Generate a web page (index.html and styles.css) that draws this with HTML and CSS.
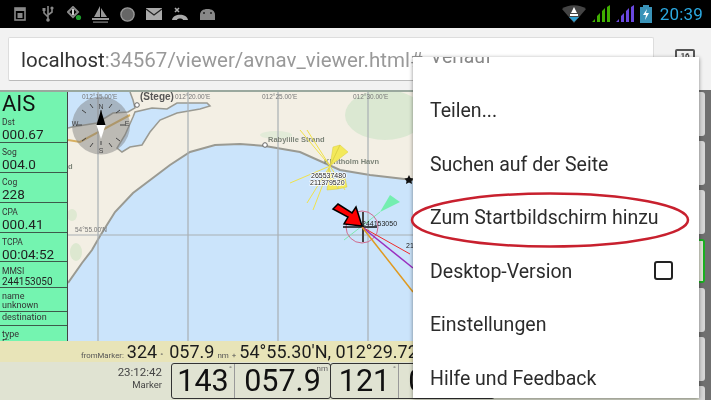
FILE: index.html
```html
<!DOCTYPE html>
<html lang="de">
<head>
  <meta charset="UTF-8" />
  <title>avnav viewer</title>
  <link rel="stylesheet" href="styles.css">
</head>
<body>
  <div class="statusbar">
    <div class="status-icons">
      <svg width="18" height="16" viewBox="0 0 18 16"><rect x="1" y="2" width="10" height="12" fill="none" stroke="#888" stroke-width="1.600"/><rect x="1" y="2" width="10" height="3" fill="#888"/><rect x="3.500" y="7" width="5" height="5" fill="#888"/></svg>
      <svg width="15" height="18" viewBox="0 0 15 18"><path d="M6 1v15M6 12L2 8V5M6 10l4-3V4" fill="none" stroke="#888" stroke-width="1.600"/><circle cx="6" cy="15" r="1.800" fill="#888"/><rect x="0.500" y="3" width="3" height="3" fill="#888"/><circle cx="10" cy="3" r="1.600" fill="#888"/></svg>
      <svg width="15" height="16" viewBox="0 0 15 16"><path d="M6 1L1 6l5 5 5-5z" fill="none" stroke="#888" stroke-width="2"/><path d="M6 3v6" stroke="#ccc" stroke-width="2"/><circle cx="11.500" cy="11.500" r="2.600" fill="#1c9a2c"/></svg>
      <svg width="18" height="19" viewBox="0 0 18 19"><path d="M8 1L2 12h6zM9 3v9h6z" fill="#999"/><rect x="0" y="13" width="17" height="2" fill="#999"/><rect x="1" y="16.500" width="15" height="1.200" fill="#888"/></svg>
      <svg width="16" height="15" viewBox="0 0 16 15"><circle cx="7.500" cy="7.500" r="6.600" fill="#666" stroke="#999" stroke-width="1.400"/></svg>
      <svg width="16" height="12" viewBox="0 0 16 12"><rect width="16" height="12" fill="#aaa"/><path d="M0 1l8 6 8-6" fill="none" stroke="#222" stroke-width="1.300"/></svg>
      <svg width="17" height="14" viewBox="0 0 17 14"><path d="M3 1l4 4M7 1L3 5" stroke="#aaa" stroke-width="1.600"/><path d="M0 13c1-7 15-7 16 0h-5c0-2-6-2-6 0z" fill="#aaa"/></svg>
      <svg width="17" height="12" viewBox="0 0 17 12"><path d="M1 12V7c0-4 3-6 7.500-6s7.500 2 7.500 6v5z" fill="#888"/><circle cx="5" cy="5" r="1" fill="#222"/><circle cx="12" cy="5" r="1" fill="#222"/></svg>
    </div>
    <div class="status-right">
      <svg width="24" height="18" viewBox="0 0 24 18"><path d="M0 4C6-1 18-1 24 4L12 18z" fill="#444"/><path d="M12 2l3 6H9zM8 9h8v2H8z" fill="#fff"/><path d="M7 12h10l-5 5z" fill="#2f9ed0"/></svg>
      <svg width="18" height="18" viewBox="0 0 18 18"><path d="M0 17l3-3v3zM5 17V11l3-3v9zM10 17V6l3-3v14zM15 17V2l3-2v17z" fill="#3fae00"/></svg>
      <svg width="18" height="18" viewBox="0 0 18 18"><path d="M0 17l3-3v3zM5 17V11l3-3v9zM10 17V6l3-3v14zM15 17V2l3-2v17z" fill="#6a48e0"/></svg>
      <svg width="12" height="18" viewBox="0 0 12 18"><path d="M3 0h6v2h3v16H0V2h3z" fill="#3a93b8"/><path d="M7 4L3 10h3l-1 5 4-7H6z" fill="#fff"/></svg>
      <span class="clock">20:39</span>
    </div>
  </div>

  <div class="toolbar">
    <div class="urlbox"><span class="host">localhost</span>:34567/viewer/avnav_viewer.html#</div>
    <div class="tabcount">16</div>
  </div>

  <div class="app">
    <div class="main">
      <div class="upper">
        <div class="ais">
          <div class="ais-title">AIS</div>
          <div class="ais-row first"><div class="ais-label">Dst</div><div class="ais-value">000.67</div></div>
          <div class="ais-row"><div class="ais-label">Sog</div><div class="ais-value">004.0</div></div>
          <div class="ais-row"><div class="ais-label">Cog</div><div class="ais-value">228</div></div>
          <div class="ais-row"><div class="ais-label">CPA</div><div class="ais-value">000.41</div></div>
          <div class="ais-row h29"><div class="ais-label">TCPA</div><div class="ais-value">00:04:52</div></div>
          <div class="ais-row h26"><div class="ais-label">MMSI</div><div class="ais-small">244153050</div></div>
          <div class="ais-row h24"><div class="ais-text">name</div><div class="ais-text">unknown</div></div>
          <div class="ais-row h14"><div class="ais-text">destination</div></div>
          <div class="ais-row last"><div class="ais-text">type</div><div class="ais-text">Ei</div></div>
        </div>

        <div class="map">
          <svg class="map-svg" width="631" height="249" viewBox="68 92 631 249">
            <rect x="68" y="92" width="631" height="249" fill="#cbe4fb"/>
            <!-- land -->
            <path d="M68 283L82 263L92 250L100 236L115 212L133 193L170 165L190 152L215 145L240 144L265 146L300 152L340 170L370 175L413 180V92H130L133 100L135 108L128 112L113 113L97 123L72 127L68 128Z" fill="#f3efe4"/>
            <ellipse cx="385" cy="115" rx="40" ry="25" fill="#dbe8d2"/>
            <ellipse cx="276" cy="135" rx="16" ry="4" fill="#e2ebd8"/>
            <ellipse cx="72" cy="215" rx="5" ry="6" fill="#dfe9d2"/>
            <ellipse cx="76" cy="252" rx="6" ry="9" fill="#dde8d0"/>
            <path d="M68 283L82 263L92 250L100 236L115 212L133 193L170 165L190 152L215 145L240 144L265 146L300 152L340 170L370 175L413 180" fill="none" stroke="#9a9a92" stroke-width="2"/>
            <path d="M130 92L133 100L135 108L128 112L113 113L97 123L72 127L68 128" fill="none" stroke="#9a9a92" stroke-width="1.500"/>
            <path d="M133 117L135 112L152 108L167 109L177 103L207 103L210 106L200 109L177 113L160 120L150 132L142 145L130 147L122 152L117 148L125 135Z" fill="#cbe4fb" stroke="#9a9a92" stroke-width="1.500"/>
            <path d="M68 140L80 142L130 115" fill="none" stroke="#d8b060" stroke-width="2"/>
            <!-- grid -->
            <path d="M98 92V341M188 92V341M278 92V341M368 92V341" stroke="#a9b0b4" stroke-width="1.200"/>
            <path d="M68 235H413" stroke="#a9b0b4" stroke-width="1.200"/>
            <text class="grid-label" x="82" y="99">012°15.00'E</text>
            <text class="grid-label" x="175" y="99">012°20.00'E</text>
            <text class="grid-label" x="262" y="99">012°25.00'E</text>
            <text class="grid-label" x="353" y="99">012°30.00'E</text>
            <text class="grid-label" x="75" y="232">54°55.00'N</text>
            <text class="city" x="140" y="100">(Stege)</text>
            <circle cx="137" cy="105" r="2.300" fill="#fff" stroke="#666" stroke-width="1"/>
            <circle cx="265" cy="145" r="2.300" fill="#fff" stroke="#666" stroke-width="1"/>
            <text class="place" x="268" y="142">Rabylille Strand</text>
            <text class="place" x="324" y="164">Klintholm Havn</text>
            <text class="place" x="68" y="169">d</text>
            <path d="M409 175l1.500 3 3 .5-2 2.500 .5 3-3-1.500-3 1.500 .5-3-2-2.500 3-.5z" fill="#111"/>
            <!-- compass -->
            <circle cx="101" cy="125.500" r="29" fill="#7a7a7a" fill-opacity=".45"/>
            <path d="M101 110v4M77 125h5M120 125h5M82 110l4 3M120 110l-4 3M82 141l4-3M120 141l-4-3M90 104l3 4M112 104l-3 4M90 147l3-4M112 147l-3-4M101 141v4" stroke="#444" stroke-width="1"/>
            <path d="M101 110l-4.500 15h9z" fill="#000"/>
            <path d="M101 139l-4.500-14h9z" fill="#fff"/>
            <text class="compass" x="101" y="109">N</text>
            <text class="compass" x="101" y="153">S</text>
            <text class="compass" x="75" y="126">W</text>
            <text class="compass" x="127" y="126">E</text>
            <!-- ais cluster -->
            <g stroke="#f0e24a" stroke-width="1">
              <path d="M330 166L300 130M330 166L307 130M330 166L290 183M330 166L307 203M330 166L313 210M330 166L345 190"/>
            </g>
            <path d="M330 166L333 147L340 145ZM330 166L340 145L348 152ZM329 168L327 190L338 189ZM338 180L345 178L347 187L338 189Z" fill="#f3e95a" stroke="#d8cc40" stroke-width=".5"/>
            <text class="target halo" x="311" y="178">265537480</text>
            <text class="target halo" x="310" y="185">211379520</text>
            <!-- selected target -->
            <path d="M344 240L380 212" stroke="#7fe8b0" stroke-width="1"/>
            <path d="M390 195L400 202L380 212Z" fill="#74eeb0"/>
            <circle cx="362" cy="227" r="16" fill="none" stroke="#d06a8c" stroke-width="1"/>
            <path d="M363 212V242" stroke="#444" stroke-width="2"/>
            <path d="M343 227H377" stroke="#111" stroke-width="1.500"/>
            <text class="target" x="362" y="226">244153050</text>
            <path d="M362 227L410 254" stroke="#ef2b2b" stroke-width="1"/>
            <path d="M362 227L413 268" stroke="#9a30c0" stroke-width="1.500"/>
            <path d="M362 227L413 292" stroke="#e09a20" stroke-width="1.500"/>
            <text class="target" x="406" y="248">21</text>
            <!-- arrow pointing at target -->
            <path d="M362 226L344 224L348 217L333 209L338 204L352 213L356 207Z" fill="#ff0000" stroke="#000" stroke-width="1.500"/>
          </svg>
        </div>
      </div>

      <div class="route-bar">
        <span class="route-label">fromMarker:</span>
        <span class="route-val">324</span><span class="unit">°</span>
        <span class="route-val dist">057.9</span><span class="unit">nm</span>
        <span class="unit plus">+</span>
        <span class="route-val">54°55.30'N, 012°29.72'E</span>
      </div>

      <div class="nav-bar">
        <div class="marker-info"><div class="marker-time">23:12:42</div><div class="marker-name">Marker</div></div>
        <div class="nav-group">
          <div class="nav-cell w-brg">143<span class="nav-unit">°</span></div>
          <div class="nav-cell w-dst">057.9<span class="nav-unit">nm</span></div>
        </div>
        <div class="nav-group">
          <div class="nav-cell w-brg2">121<span class="nav-unit">°</span></div>
          <div class="nav-cell w-dst">004.0</div>
        </div>
      </div>
    </div>

    <div class="side-buttons">
      <div class="side-button"></div>
      <div class="side-button"></div>
      <div class="side-button"></div>
      <div class="side-button active"></div>
      <div class="side-button"></div>
      <div class="side-button"></div>
      <div class="side-button"></div>
    </div>
  </div>

  <div class="menu">
    <div class="menu-item cut">Verlauf</div>
    <div class="menu-item">Teilen...</div>
    <div class="menu-item">Suchen auf der Seite</div>
    <div class="menu-item">Zum Startbildschirm hinzu</div>
    <div class="menu-item">Desktop-Version<span class="checkbox"></span></div>
    <div class="menu-item">Einstellungen</div>
    <div class="menu-item">Hilfe und Feedback</div>
  </div>
  <svg class="ring" width="282" height="58" viewBox="0 0 282 58"><ellipse cx="141" cy="29" rx="138" ry="26.500" fill="none" stroke="#c8202e" stroke-width="2.500"/></svg>
</body>
</html>
```

FILE: styles.css
```css
* { box-sizing: border-box; }
html, body { margin: 0; height: 400px; overflow: hidden; }
body { width: 711px; font-family: Roboto, "Liberation Sans", sans-serif; background: #f2f2f2; position: relative; display: flex; flex-direction: column; }
.statusbar, .toolbar, .app, .menu { filter: blur(.3px); }

.statusbar { height: 28px; background: #000; display: flex; justify-content: space-between; align-items: center; padding: 0 8px 0 14px; flex: none; }
.status-icons { display: flex; align-items: center; gap: 10px; }
.status-right { display: flex; align-items: center; gap: 6px; }
.clock { color: #2ba8e0; font-size: 17px; margin-left: 2px; letter-spacing: .2px; }

.toolbar { height: 62px; flex: none; display: flex; align-items: center; padding: 0 0 0 8px; background: #f2f2f2; }
.urlbox { width: 646px; height: 44px; background: #fff; border: 1px solid #ddd; border-bottom-color: #bbb; border-radius: 2px; font-size: 20.500px; line-height: 44px; padding-left: 12px; color: #999; white-space: nowrap; overflow: hidden; }
.host { color: #333; }
.tabcount { width: 20px; height: 20px; margin-left: 21px; border: 2px solid #555; border-radius: 2px; font-size: 8px; text-align: center; color: #444; font-weight: bold; }

.app { flex: 1; display: flex; min-height: 0; }
.main { flex: 1; display: flex; flex-direction: column; min-width: 0; }
.upper { height: 251px; display: flex; flex: none; border-top: 2px solid #9aa89e; }
.ais { width: 68px; flex: none; background: #74f4b0; border-right: 1px solid #444; overflow: hidden; color: #222; }
.ais-title { font-size: 22px; line-height: 24px; padding-left: 2px; color: #111; }
.ais-row { padding: 4px 0 0 2px; border-bottom: 1px solid #3d5a4b; height: 30px; }
.ais-row.first { height: 27px; padding-top: 1px; }
.ais-row.h29 { height: 29px; }
.ais-row.h26 { height: 26px; }
.ais-row.h24 { height: 24px; }
.ais-row.h14 { height: 14px; padding-top: 1px; }
.ais-row.last { border-bottom: 0; height: 22px; }
.ais-label { font-size: 8.500px; line-height: 10px; color: #333; }
.ais-value { font-size: 13.500px; line-height: 14px; color: #222; }
.ais-small { font-size: 10px; line-height: 11px; color: #222; }
.ais-text { font-size: 9px; line-height: 9px; color: #333; }

.map { flex: 1; min-width: 0; overflow: hidden; }
.map-svg { display: block; }
.grid-label { font: 6.500px "Liberation Sans", sans-serif; fill: #777; }
.city { font: bold 10px "Liberation Sans", sans-serif; fill: #555; }
.place { font: bold 7.500px "Liberation Sans", sans-serif; fill: #7c8478; }
.target { font: 7px "Liberation Sans", sans-serif; fill: #222; }
.target.halo { paint-order: stroke; stroke: #fff; stroke-width: 1.500px; }
.compass { font: 7px "Liberation Sans", sans-serif; fill: #444; text-anchor: middle; }

.side-buttons { width: 12px; flex: none; background: #6f6f6f; display: flex; flex-direction: column; gap: 5px; padding: 2px 6px 0 0; overflow: hidden; }
.side-button { height: 44px; flex: none; background: #d6d6d6; border-radius: 0 3px 3px 0; }
.side-button.active { background: #dfe2d4; border: 2px solid #19b020; border-left: 0; }

.route-bar { height: 21px; flex: none; background: #e8e4b8; display: flex; align-items: baseline; padding-left: 81px; line-height: 21px; white-space: nowrap; overflow: hidden; color: #1c1c1c; }
.route-label { font-size: 7.800px; color: #555; margin-right: 3px; }
.route-val { font-size: 18px; }
.route-val.dist { margin-left: 6px; }
.unit { font-size: 8px; color: #555; margin-left: 3px; }
.unit.plus { margin: 0 3px 0 3px; }

.nav-bar { flex: 1; background: #e0e3d2; display: flex; min-height: 0; padding-top: 1px; }
.marker-info { width: 171px; flex: none; text-align: right; padding: 2px 9px 0 0; color: #444; }
.marker-time { font-size: 11.500px; line-height: 14px; }
.marker-name { font-size: 9.500px; line-height: 12px; }
.nav-group { display: flex; border: 1px solid #333; border-radius: 3px; height: 36px; }
.nav-group + .nav-group { margin-left: -1px; }
.nav-cell { position: relative; font-size: 30.500px; line-height: 34px; color: #111; text-align: center; overflow: hidden; }
.nav-cell + .nav-cell { border-left: 1px solid #999; }
.nav-unit { position: absolute; top: 1px; right: 2px; font-size: 8px; line-height: 8px; color: #666; }
.w-brg { width: 62px; }
.w-brg2 { width: 67px; }
.w-dst { width: 96px; }

.menu { position: absolute; left: 413px; top: 57px; width: 286px; height: 341px; background: #fff; box-shadow: 0 1px 4px rgba(0,0,0,.45); padding-left: 17px; overflow: hidden; }
.menu-item { height: 53.500px; line-height: 53.500px; font-size: 19.500px; color: #2c2c2c; white-space: nowrap; position: relative; }
.menu-item.cut { height: 27px; line-height: 0; color: #888; }
.checkbox { position: absolute; right: 26px; top: 16px; width: 19px; height: 19px; border: 2px solid #222; border-radius: 3px; }
.ring { position: absolute; left: 409px; top: 191px; }
```
